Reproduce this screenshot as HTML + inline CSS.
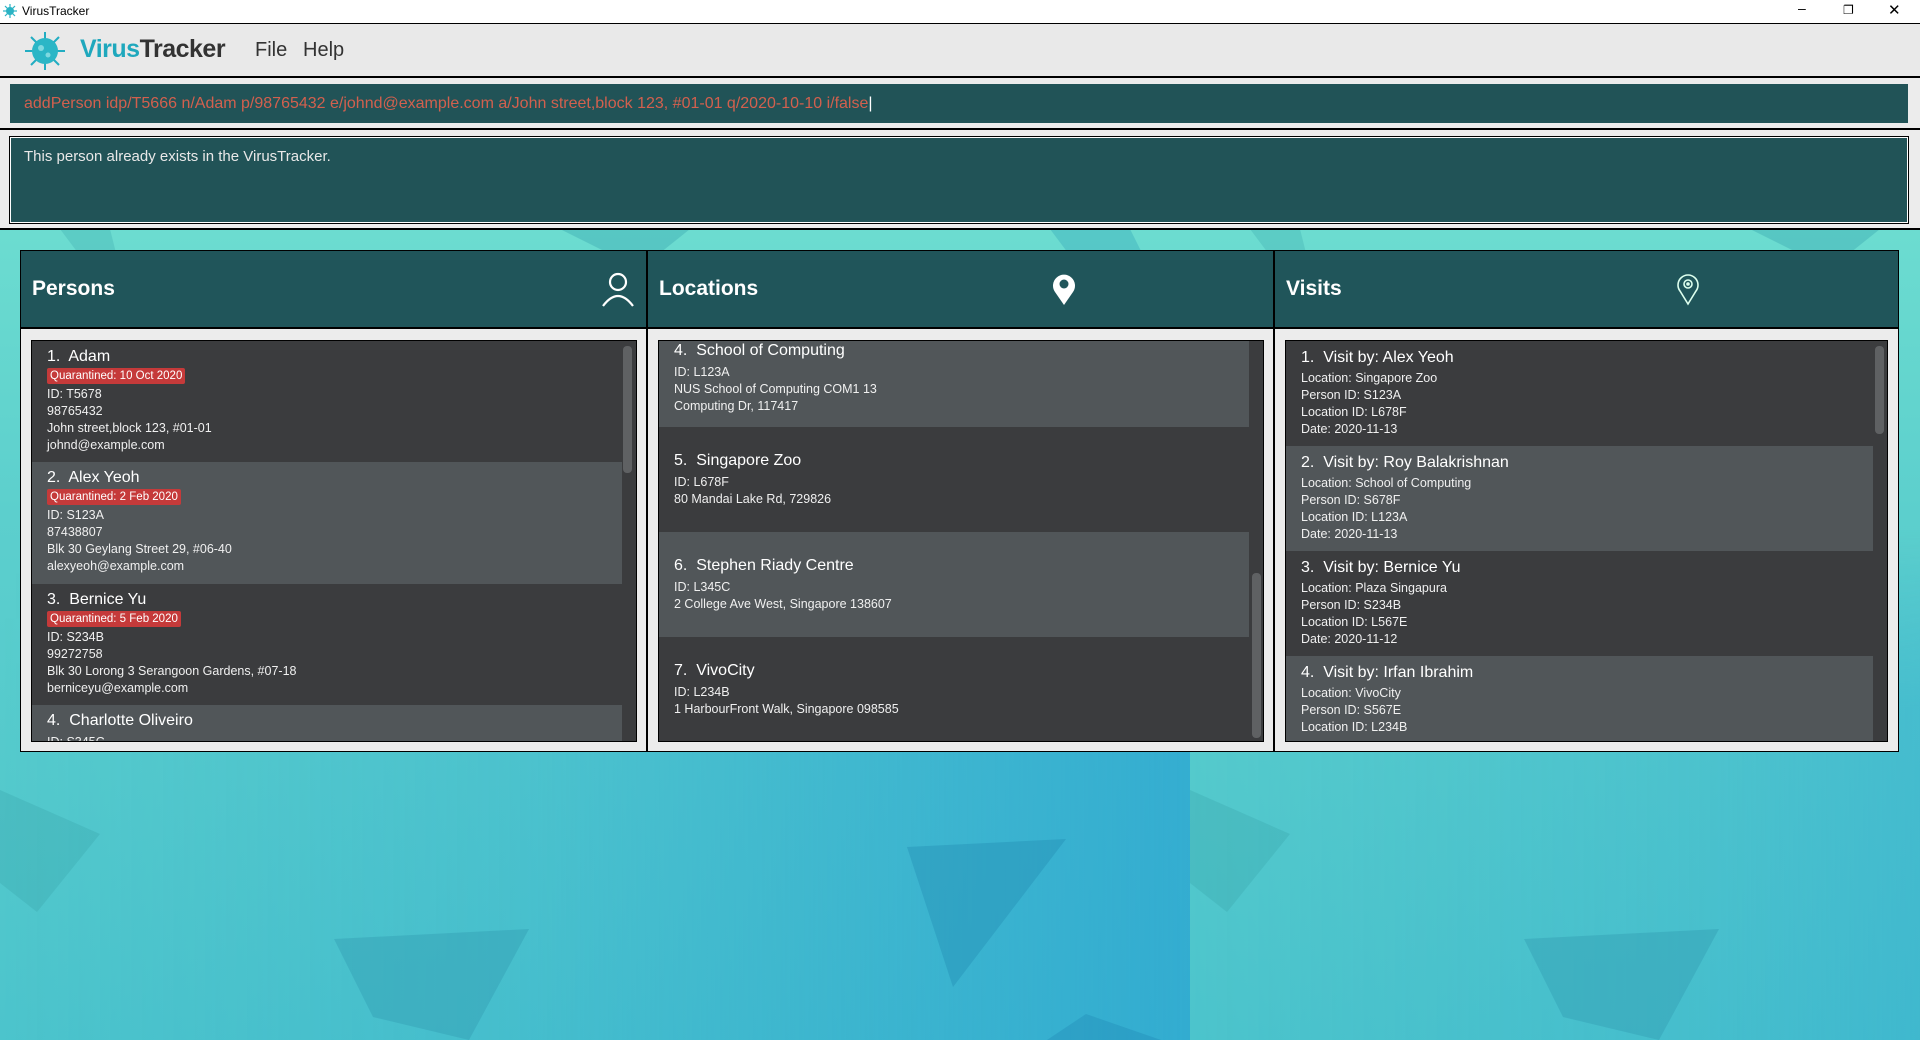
<!DOCTYPE html>
<html><head><meta charset="utf-8"><style>
*{margin:0;padding:0;box-sizing:border-box}
body{width:1920px;height:1040px;overflow:hidden;position:relative;font-family:"Liberation Sans",sans-serif;background:#fff}
.abs{position:absolute}
.tile{position:absolute;top:229px;width:1190px;height:811px;overflow:hidden}
.titlebar{top:0;left:0;width:1920px;height:23px;background:#fff;font-size:12px;color:#000}
.menubar{top:23px;left:0;width:1920px;height:55px;background:#e9e9e9;border-top:1px solid #000;border-bottom:2px solid #000}
.sec{left:0;width:1920px;background:#ececec;border-bottom:2px solid #000}
.cmd{left:10px;top:84px;width:1898px;height:39px;background:#215357;color:#d2604e;font-size:16px;line-height:39px;padding-left:14px;white-space:nowrap}
.res{left:10px;top:137px;width:1898px;height:86px;background:#215357;border:1px solid #fff;outline:1px solid #000;color:#e8e8e8;font-size:15px;padding:10px 13px}
.panel{top:250px;height:502px;background:#ececec;border:1px solid #000}
.hdr{position:absolute;left:0;top:0;right:0;height:78px;background:#20555a;border-bottom:2px solid #000;color:#fff;font-weight:bold;font-size:21px;line-height:76px;padding-left:11px}
.list{position:absolute;top:89px;height:402px;background:#3b3c3e;border:1px solid #000;overflow:hidden}
.card{position:absolute;left:0;color:#f0f0f0;font-size:12.5px;line-height:17px;padding-left:15px}
.dk{background:#3b3c3e}.lt{background:#515659}
.nm{font-size:16px;line-height:20px;color:#fff;white-space:pre}
.tag{display:inline-block;background:#c53a3a;color:#fff;font-size:11.5px;line-height:16px;padding:0 3px;border-radius:2px;margin:1px 0 2px}
.sb{position:absolute;background:#5f6163;border-radius:4px;width:9px}
</style></head><body>
<svg width="0" height="0" style="position:absolute"><defs>
<linearGradient id="gv" x1="0" y1="0" x2="0" y2="1"><stop offset="0" stop-color="#6cdcd0"/><stop offset=".35" stop-color="#5ccfcd"/><stop offset="1" stop-color="#4cc4cc"/></linearGradient>
<linearGradient id="gh" x1="0" y1="0" x2="1" y2="0"><stop offset="0" stop-color="#2aa4d2" stop-opacity="0"/><stop offset=".45" stop-color="#2aa4d2" stop-opacity=".2"/><stop offset="1" stop-color="#2aa4d2" stop-opacity=".75"/></linearGradient>
<linearGradient id="fade" x1="0" y1="0" x2="0" y2="1"><stop offset="0" stop-color="#fff" stop-opacity="0"/><stop offset=".35" stop-color="#fff" stop-opacity="1"/></linearGradient>
<mask id="m"><rect y="300" width="1190" height="511" fill="url(#fade)"/></mask>
<g id="tex">
<rect width="1190" height="811" fill="url(#gv)"/>
<rect width="1190" height="811" fill="url(#gh)" mask="url(#m)"/>
<polygon points="334,710 529,700 469,811 373,788" fill="#2f95ab" opacity=".35"/>
<polygon points="907,618 1066,610 953,758" fill="#1f88ae" opacity=".35"/>
<polygon points="1047,811 1086,785 1161,811" fill="#1f86b4" opacity=".35"/>
<polygon points="0,561 100,605 37,683 0,654" fill="#37a2a8" opacity=".3"/>
<polygon points="560,0 690,0 640,40" fill="#3aa8b0" opacity=".4"/>
<polygon points="60,0 110,0 120,40 90,40" fill="#45b5b5" opacity=".4"/>
<polygon points="1050,0 1130,0 1150,40 1080,40" fill="#38a9b8" opacity=".4"/>
</g></defs></svg>
<div class="tile" style="left:0"><svg width="1190" height="811"><use href="#tex"/></svg></div>
<div class="tile" style="left:1190px;width:730px"><svg width="1190" height="811"><use href="#tex"/></svg></div>

<div class="abs titlebar">
<svg class="abs" style="left:3px;top:4px" width="14" height="14" viewBox="0 0 14 14"><circle cx="7" cy="7" r="4" fill="#2bb3c4"/><g stroke="#2bb3c4" stroke-width="1.2"><line x1="7" y1="0" x2="7" y2="14"/><line x1="0" y1="7" x2="14" y2="7"/><line x1="2" y1="2" x2="12" y2="12"/><line x1="12" y1="2" x2="2" y2="12"/></g></svg>
<span class="abs" style="left:22px;top:4px">VirusTracker</span>
<span class="abs" style="left:1798px;top:0;font-size:14px">&#8211;</span>
<span class="abs" style="left:1843px;top:3px;font-size:12px">&#10064;</span>
<span class="abs" style="left:1888px;top:1px;font-size:15px">&#10005;</span>
</div>

<div class="abs menubar">
<svg class="abs" style="left:22px;top:6px" width="46" height="42" viewBox="0 0 46 42"><g stroke="#22adc2" stroke-width="2"><line x1="23" y1="2" x2="23" y2="40"/><line x1="3" y1="21" x2="43" y2="21"/><line x1="9" y1="7" x2="37" y2="35"/><line x1="37" y1="7" x2="9" y2="35"/></g><circle cx="23" cy="21" r="13" fill="#2bb6c6"/><circle cx="19" cy="18" r="3" fill="#7fd9e0"/><circle cx="26" cy="25" r="2.5" fill="#7fd9e0"/></svg>
<span class="abs" style="left:80px;top:11px;font-size:25px;font-weight:bold;color:#1fa8bd;letter-spacing:-.5px">Virus<span style="color:#333">Tracker</span></span>
<span class="abs" style="left:255px;top:15px;font-size:20px;color:#333">File</span>
<span class="abs" style="left:303px;top:15px;font-size:20px;color:#333">Help</span>
</div>

<div class="abs sec" style="top:78px;height:52px"></div>
<div class="abs cmd">addPerson idp/T5666 n/Adam p/98765432 e/johnd@example.com a/John street,block 123, #01-01 q/2020-10-10 i/false<span style="color:#fff">|</span></div>
<div class="abs sec" style="top:130px;height:100px"></div>
<div class="abs res">This person already exists in the VirusTracker.</div>

<!-- Persons -->
<div class="abs panel" style="left:20px;width:627px">
<div class="hdr">Persons
<svg class="abs" style="right:11px;top:21px" width="34" height="36" viewBox="0 0 34 36"><circle cx="17" cy="10" r="8" fill="none" stroke="#fff" stroke-width="2.2"/><path d="M2 34 Q17 14 32 34" fill="none" stroke="#fff" stroke-width="2.2"/></svg></div>
<div class="list" style="left:10px;width:606px">
<div class="card dk" style="top:0;height:121px;width:590px;padding-top:6px"><div class="nm">1.  Adam</div><span class="tag">Quarantined: 10 Oct 2020</span><div>ID: T5678</div><div>98765432</div><div>John street,block 123, #01-01</div><div>johnd@example.com</div></div>
<div class="card lt" style="top:121px;height:122px;width:590px;padding-top:6px"><div class="nm">2.  Alex Yeoh</div><span class="tag">Quarantined: 2 Feb 2020</span><div>ID: S123A</div><div>87438807</div><div>Blk 30 Geylang Street 29, #06-40</div><div>alexyeoh@example.com</div></div>
<div class="card dk" style="top:243px;height:121px;width:590px;padding-top:6px"><div class="nm">3.  Bernice Yu</div><span class="tag">Quarantined: 5 Feb 2020</span><div>ID: S234B</div><div>99272758</div><div>Blk 30 Lorong 3 Serangoon Gardens, #07-18</div><div>berniceyu@example.com</div></div>
<div class="card lt" style="top:364px;height:60px;width:590px;padding-top:6px"><div class="nm">4.  Charlotte Oliveiro</div><div style="margin-top:3px">ID: S345C</div></div>
<div class="sb" style="left:591px;top:5px;height:127px"></div>
</div></div>

<!-- Locations -->
<div class="abs panel" style="left:647px;width:627px">
<div class="hdr">Locations
<svg class="abs" style="left:403px;top:21px" width="26" height="34" viewBox="0 0 26 34"><path d="M13 33 L4 20 A11 11 0 1 1 22 20 Z" fill="#fff"/><circle cx="13" cy="12" r="4.5" fill="#20555a"/></svg></div>
<div class="list" style="left:10px;width:606px">
<div class="card lt" style="top:-26px;height:112px;width:590px;padding-top:26px"><div class="nm">4.  School of Computing</div><div style="margin-top:3px">ID: L123A</div><div>NUS School of Computing COM1 13</div><div>Computing Dr, 117417</div></div>
<div class="card dk" style="top:86px;height:105px;width:590px;padding-top:24px"><div class="nm">5.  Singapore Zoo</div><div style="margin-top:3px">ID: L678F</div><div>80 Mandai Lake Rd, 729826</div></div>
<div class="card lt" style="top:191px;height:105px;width:590px;padding-top:24px"><div class="nm">6.  Stephen Riady Centre</div><div style="margin-top:3px">ID: L345C</div><div>2 College Ave West, Singapore 138607</div></div>
<div class="card dk" style="top:296px;height:106px;width:590px;padding-top:24px"><div class="nm">7.  VivoCity</div><div style="margin-top:3px">ID: L234B</div><div>1 HarbourFront Walk, Singapore 098585</div></div>
<div class="sb" style="left:593px;top:232px;height:165px"></div>
</div></div>

<!-- Visits -->
<div class="abs panel" style="left:1274px;width:625px">
<div class="hdr">Visits
<svg class="abs" style="left:400px;top:21px" width="26" height="34" viewBox="0 0 26 34"><path d="M13 32 L5 19 A10 10 0 1 1 21 19 Z" fill="none" stroke="#dfe" stroke-width="1.6"/><circle cx="13" cy="12" r="4" fill="none" stroke="#dfe" stroke-width="1.6"/><circle cx="13" cy="12" r="1.8" fill="#dfe"/></svg></div>
<div class="list" style="left:10px;width:603px">
<div class="card dk" style="top:0;height:105px;width:587px;padding-top:7px"><div class="nm">1.  Visit by: Alex Yeoh</div><div style="margin-top:2px">Location: Singapore Zoo</div><div>Person ID: S123A</div><div>Location ID: L678F</div><div>Date: 2020-11-13</div></div>
<div class="card lt" style="top:105px;height:105px;width:587px;padding-top:7px"><div class="nm">2.  Visit by: Roy Balakrishnan</div><div style="margin-top:2px">Location: School of Computing</div><div>Person ID: S678F</div><div>Location ID: L123A</div><div>Date: 2020-11-13</div></div>
<div class="card dk" style="top:210px;height:105px;width:587px;padding-top:7px"><div class="nm">3.  Visit by: Bernice Yu</div><div style="margin-top:2px">Location: Plaza Singapura</div><div>Person ID: S234B</div><div>Location ID: L567E</div><div>Date: 2020-11-12</div></div>
<div class="card lt" style="top:315px;height:90px;width:587px;padding-top:7px"><div class="nm">4.  Visit by: Irfan Ibrahim</div><div style="margin-top:2px">Location: VivoCity</div><div>Person ID: S567E</div><div>Location ID: L234B</div></div>
<div class="sb" style="left:589px;top:5px;height:88px"></div>
</div></div>
</body></html>
